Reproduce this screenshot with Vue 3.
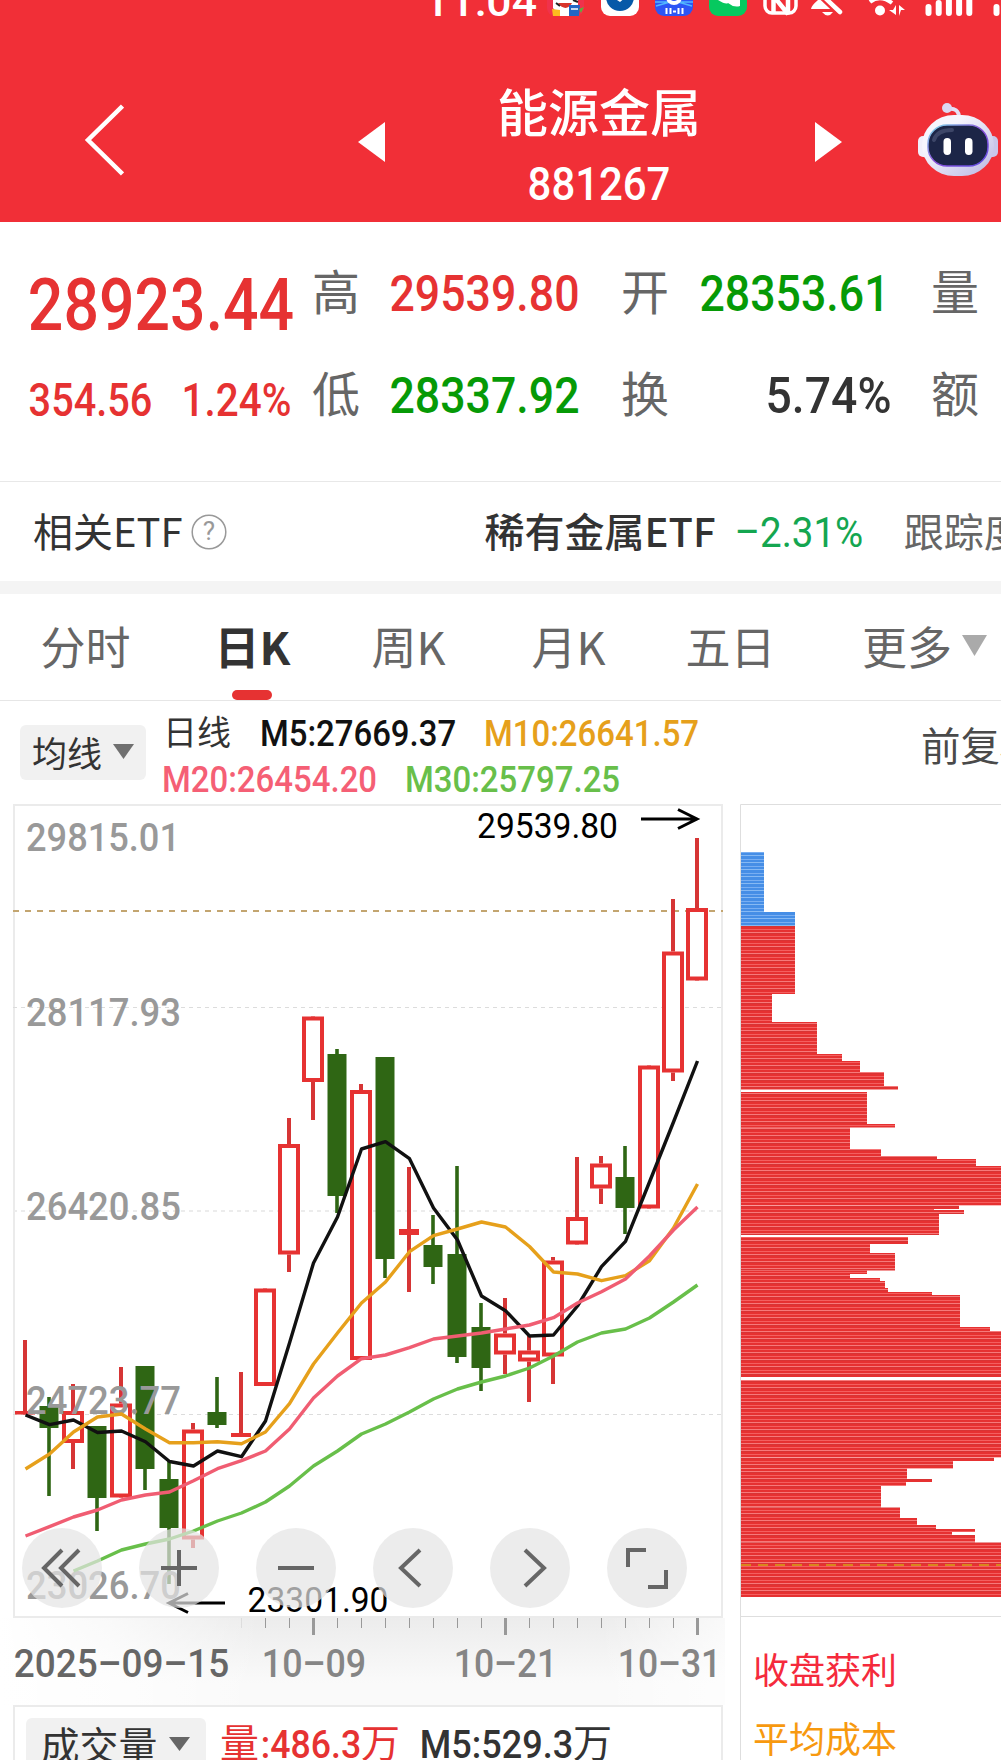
<template>
  <div class="page">
    <header class="header">
      <div class="status-bar">
        <svg width="577" height="20" viewBox="424 0 577 20">
          <text class="clock" x="424" y="15.5" textLength="113" lengthAdjust="spacingAndGlyphs">11:04</text>
          <!-- 应用通知图标 -->
          <rect x="547" y="-21" width="37" height="37" rx="8" fill="#f0324b" />
          <path d="M553 8V-4h25V8l-6 8h-12z" fill="#fff" />
          <path d="M558 3c5 7 11 6 14 0z" fill="#d8342b" />
          <path d="M556 3l4 3M573 0l5 2" stroke="#222" stroke-width="2" />
          <path d="M552 9l8 1v6h-7z" fill="#fdbb1f" />
          <path d="M569 5h11l-1 11h-10z" fill="#2166c4" />
          <path d="M571 9h7" stroke="#fff" stroke-width="1.5" />
          <path d="M579 9l5-2-3 6z" fill="#5fae3d" />
          <rect x="601" y="-22" width="38" height="38" rx="9" fill="#fff" />
          <circle cx="620" cy="-3" r="14" fill="#0659a8" />
          <path d="M614-2l6 4 6-5z" fill="#fff" />
          <rect x="655" y="-22" width="38" height="38" rx="9" fill="#2d55f5" />
          <path d="M655 2h38M656 6l14-4M692 6l-14-4" stroke="#53b7ff" stroke-width="1.5" />
          <circle cx="674" cy="-3" r="8" fill="#fff" />
          <path d="M670-2q4 4 8 0" fill="none" stroke="#2d55f5" stroke-width="2" />
          <path d="M666.500 8v6M670.500 8v6M673 11.500h3M678.500 8v6M682.500 8v6" stroke="#fff" stroke-width="2" />
          <rect x="709" y="-22" width="38" height="38" rx="9" fill="#06c95f" />
          <path d="M718 0q8 5 10 3q6 5 12 3V-4h-22z" fill="#fff" />
          <!-- NFC、静音、网络 -->
          <rect x="765" y="-19" width="31" height="32" rx="7" fill="none" stroke="#fff" stroke-width="3.500" />
          <path d="M773.500 14V-4L788 14V-10" fill="none" stroke="#fff" stroke-width="4.500" stroke-linejoin="bevel" />
          <path d="M811 9q0-3 7-9v-6h16v9l2 6z" fill="#fff" />
          <path d="M823-4l20 19" stroke="#f12f37" stroke-width="9" />
          <path d="M822-5l18 17" stroke="#fff" stroke-width="4.500" stroke-linecap="round" />
          <path d="M822 12h11q-5 7-11 0z" fill="#fff" />
          <path d="M870 2q10-8 22 1" fill="none" stroke="#fff" stroke-width="4" />
          <circle cx="880" cy="10.500" r="5" fill="#fff" />
          <path d="M896 5v10l-7-5h4zM899 16V5l6 5h-4z" fill="#fff" />
          <path
            v-for="(top, i) in signalTops"
            :key="'s' + i"
            :d="`M${928.500 + i * 10.200} ${top}V13`"
            stroke="#fff"
            stroke-width="6"
            stroke-linecap="round"
          />
          <path d="M996.500 7V13" stroke="#fff" stroke-width="6" stroke-linecap="round" />
        </svg>
      </div>
      <div class="nav">
        <svg class="back" width="40" height="72" viewBox="0 0 40 72">
          <path d="M38.500 2L4 36l34.500 34" fill="none" stroke="#fff" stroke-width="4.500" />
        </svg>
        <svg class="prev" width="27" height="40" viewBox="0 0 27 40">
          <path d="M27 0v40L0 20z" fill="#fff" />
        </svg>
        <div class="title">
          <span class="name">能源金属</span>
          <FitText text="881267" :w="140" :h="33" :weight="500" />
        </div>
        <svg class="next" width="27" height="40" viewBox="0 0 27 40">
          <path d="M0 0v40l27-20z" fill="#fff" />
        </svg>
        <svg class="robot" width="80" height="75" viewBox="0 0 80 75">
          <defs>
            <linearGradient id="shell" x1="0" y1="0" x2="1" y2="1">
              <stop offset="0.300" stop-color="#f6f5fd" />
              <stop offset="1" stop-color="#b9b6e2" />
            </linearGradient>
            <linearGradient id="rim" x1="0" y1="0" x2="1" y2="1">
              <stop offset="0" stop-color="#7fe0ea" />
              <stop offset="0.500" stop-color="#8a4fd8" />
              <stop offset="1" stop-color="#5a4be0" />
            </linearGradient>
          </defs>
          <path d="M29 6q12-2 12 9" fill="none" stroke="#e4e0f6" stroke-width="4" />
          <circle cx="29" cy="5" r="5" fill="#dcd8f2" />
          <rect x="0" y="33" width="12" height="21" rx="5" fill="#f1effb" />
          <rect x="68" y="33" width="12" height="21" rx="5" fill="#c9c6ea" />
          <rect x="4" y="12" width="72" height="61" rx="32" fill="url(#shell)" />
          <rect x="10" y="22" width="60" height="41" rx="19" fill="#1c2547" stroke="url(#rim)" stroke-width="1.500" />
          <path d="M16 37q3-10 18-10" fill="none" stroke="#3d4668" stroke-width="4" stroke-linecap="round" />
          <rect x="25.500" y="35" width="7.500" height="17" rx="3.700" fill="#fff" />
          <rect x="47" y="35" width="7.500" height="17" rx="3.700" fill="#fff" />
        </svg>
      </div>
    </header>

    <section class="quote">
      <div class="price">
        <FitText class="red" text="28923.44" :w="262" :h="51" :weight="500" />
        <div class="change red">
          <FitText text="354.56" :w="121" :h="33" :weight="500" />
          <FitText text="1.24%" :w="107" :h="33" :weight="500" />
        </div>
      </div>
      <div class="fields">
        <template v-for="f in fields" :key="f.label">
          <span class="label">{{ f.label }}</span>
          <FitText v-if="f.value" :class="['value', f.color]" :text="f.value" :w="f.w" :h="36" :weight="500" />
        </template>
      </div>
    </section>

    <section class="etf">
      <span>相关ETF</span>
      <svg class="help" width="36" height="36" viewBox="0 0 36 36">
        <circle cx="18" cy="18" r="16.800" fill="none" stroke="#999" stroke-width="1.500" />
        <text x="18" y="26" text-anchor="middle">?</text>
      </svg>
      <span class="etf-name">稀有金属ETF</span>
      <FitText class="etf-rate" text="–2.31%" :w="126" :h="30" />
      <span class="etf-track">跟踪度</span>
    </section>

    <ul class="tabs">
      <li v-for="t in tabs" :key="t" :class="{ active: t === '日K' }">{{ t }}</li>
      <li class="more">
        更多
        <svg width="25" height="21" viewBox="0 0 25 21"><path d="M0 0h25L12.500 21z" fill="#aaa" /></svg>
      </li>
    </ul>

    <section class="ma-bar">
      <button class="picker">
        均线
        <svg width="21" height="15" viewBox="0 0 21 15"><path d="M0 0h21L10.500 15z" fill="#707070" /></svg>
      </button>
      <div class="ma-list">
        <div class="ma-row">
          <span class="cycle">日线</span>
          <FitText class="m5" text="M5:27669.37" :w="194" :h="26" :weight="500" />
          <FitText class="m10" text="M10:26641.57" :w="213" :h="26" :weight="500" />
        </div>
        <div class="ma-row">
          <FitText class="m20" text="M20:26454.20" :w="213" :h="26" :weight="500" />
          <FitText class="m30" text="M30:25797.25" :w="213" :h="26" :weight="500" />
        </div>
      </div>
      <span class="adjust">前复权</span>
    </section>

    <div class="charts">
      <div class="kline">
        <svg class="kline-svg" width="725" height="814" viewBox="0 804 725 814">
          <rect x="14" y="805" width="708" height="812" fill="none" stroke="#ebebeb" stroke-width="2" />
          <path d="M13 1007.500H722M13 1414.500H722" stroke="#dcdcdc" stroke-dasharray="4 4" />
          <path d="M13 1211H722" stroke="#ececec" stroke-width="2" stroke-dasharray="4 4" />
          <path d="M13 911H723" stroke="#c3a570" stroke-width="2" stroke-dasharray="6 6" />

          <!-- K线 -->
          <g v-for="(c, i) in candles" :key="'c' + i">
            <template v-if="c[0]">
              <path
                :d="`M${candleX(i)} ${c[1]}V${c[2]}M${candleX(i)} ${c[3]}V${c[4]}`"
                stroke="#d63535"
                stroke-width="4"
              />
              <rect
                v-if="c[3] - c[2] > 7"
                :x="candleX(i) - 9"
                :y="c[2] + 2"
                width="18"
                :height="c[3] - c[2] - 4"
                fill="#fff"
                stroke="#e63232"
                stroke-width="4"
              />
              <rect v-else :x="candleX(i) - 10" :y="c[2]" width="20" :height="c[3] - c[2]" fill="#e63232" />
            </template>
            <template v-else>
              <path :d="`M${candleX(i)} ${c[1]}V${c[4]}`" stroke="#2f6614" stroke-width="3.600" />
              <rect :x="candleX(i) - 9.500" :y="c[2]" width="19" :height="c[3] - c[2]" fill="#2f6614" />
            </template>
          </g>

          <!-- 纵轴刻度 -->
          <text
            v-for="a in axisLabels"
            :key="a.text"
            class="axis-label"
            x="26"
            :y="a.y"
            :textLength="a.w"
            lengthAdjust="spacingAndGlyphs"
          >{{ a.text }}</text>

          <!-- 均线 -->
          <polyline
            v-for="m in maLines"
            :key="m.color"
            :points="toPoints(m)"
            fill="none"
            :stroke="m.color"
            stroke-width="3.400"
            stroke-linejoin="round"
          />

          <!-- 最高、最低标注 -->
          <text class="mark" x="477" y="838" textLength="141" lengthAdjust="spacingAndGlyphs">29539.80</text>
          <path d="M641 819H696M678 809.500L697 819l-19 9.500" fill="none" stroke="#000" stroke-width="3" />
          <text class="mark" x="247.500" y="1612" textLength="141" lengthAdjust="spacingAndGlyphs">23301.90</text>
          <path d="M225 1603H170M188 1593.500L169 1603l19 9.500" fill="none" stroke="#000" stroke-width="3" />
        </svg>

        <div class="tools">
          <button v-for="(d, i) in toolIcons" :key="'t' + i">
            <svg width="80" height="80" viewBox="0 0 80 80">
              <path :d="d" fill="none" stroke="#666" stroke-width="4" />
            </svg>
          </button>
        </div>

        <div class="time-axis">
          <svg class="ticks" width="725" height="31" viewBox="0 0 725 31">
            <path
              v-for="i in 20"
              :key="'k' + i"
              :d="tickPath(i)"
              :stroke="i === 1 ? '#ddd' : '#999'"
              :stroke-width="isMajor(i) ? 3 : 1"
            />
          </svg>
          <div class="dates">
            <FitText class="d0" text="2025–09–15" :w="213" :h="28" :weight="500" />
            <FitText class="d1" text="10–09" :w="102" :h="28" :weight="500" />
            <FitText class="d2" text="10–21" :w="101" :h="28" :weight="500" />
            <FitText class="d3" text="10–31" :w="101" :h="28" :weight="500" />
          </div>
        </div>

        <div class="volume">
          <button class="picker vol-picker">
            成交量
            <svg width="21" height="14" viewBox="0 0 21 14"><path d="M0 0h21L10.500 14z" fill="#666" /></svg>
          </button>
          <span class="vol red">量<FitText text=":486.3" :w="98" :h="28" :weight="500" />万</span>
          <span class="vol vol-m5"><FitText text="M5:529.3" :w="151" :h="28" :weight="500" />万</span>
        </div>
      </div>

      <div class="chips">
        <svg class="chip-svg" width="261" height="813" viewBox="740 804 261 813">
          <defs>
            <pattern id="stripe-red" patternUnits="userSpaceOnUse" x="0" y="855" width="10" height="7">
              <rect width="10" height="7" fill="#e63131" />
              <rect width="10" height="1" fill="#f7797a" />
              <rect y="1" width="10" height="1" fill="#d83434" />
              <rect y="4" width="10" height="1" fill="#f45f5f" />
            </pattern>
            <pattern id="stripe-blue" patternUnits="userSpaceOnUse" x="0" y="855" width="10" height="7">
              <rect width="10" height="7" fill="#468ee6" />
              <rect width="10" height="1" fill="#86b9f3" />
              <rect y="4" width="10" height="1" fill="#78aef2" />
            </pattern>
          </defs>
          <path d="M1001 804.500H740.500V1617M740 1616.500H1001" fill="none" stroke="#dedede" />
          <rect
            v-for="(r, i) in chipRows"
            :key="'r' + i"
            x="741"
            :y="r[0]"
            :width="r[2]"
            :height="r[1] - r[0]"
            :fill="r[0] < 926 ? 'url(#stripe-blue)' : 'url(#stripe-red)'"
          />
          <path d="M741 1565H1001" stroke="#d9861c" stroke-width="2" stroke-dasharray="10 7" />
        </svg>
        <div class="chip-legend">
          <span class="profit">收盘获利</span>
          <span class="cost">平均成本</span>
        </div>
      </div>
    </div>
  </div>
</template>

<script setup>
import { h } from 'vue'

// 数字文本：w、h 为字形的宽度和大写高度
const FitText = (props) => {
  const size = props.h / 0.711
  const pad = size * 0.03
  return h('svg', { width: props.w, height: props.h, style: { overflow: 'visible', flex: 'none' } }, [
    h('text', {
      x: -pad,
      y: props.h,
      textLength: props.w + pad * 2,
      lengthAdjust: 'spacingAndGlyphs',
      fill: 'currentColor',
      'font-size': size,
      'font-weight': props.weight || 400,
      'font-family': 'Roboto, sans-serif'
    }, props.text)
  ])
}
FitText.props = ['text', 'w', 'h', 'weight']

const signalTops = [7, 3, 0, 0, 0]

const fields = [
  { label: '高', value: '29539.80', w: 187, color: 'red' },
  { label: '开', value: '28353.61', w: 187, color: 'green' },
  { label: '量' },
  { label: '低', value: '28337.92', w: 187, color: 'green' },
  { label: '换', value: '5.74%', w: 123, color: 'dark' },
  { label: '额' }
]

const tabs = ['分时', '日K', '周K', '月K', '五日']

// [是否上涨, 最高, 实体上沿, 实体下沿, 最低]
const candles = [
  [1, 1340, 1411, 1414.5, 1414],
  [0, 1397, 1406, 1428, 1496],
  [1, 1384, 1411, 1443, 1469],
  [0, 1426, 1426, 1498, 1531],
  [1, 1367, 1403.5, 1497.5, 1497],
  [0, 1366, 1366, 1469, 1490],
  [0, 1460, 1479, 1528, 1584],
  [1, 1423, 1429.5, 1539.5, 1548],
  [0, 1377, 1412, 1425, 1428],
  [1, 1372, 1433, 1437, 1437],
  [1, 1290, 1288.5, 1386, 1386],
  [1, 1118, 1144, 1254.5, 1272],
  [1, 1016, 1016.5, 1082, 1120],
  [0, 1049, 1054, 1196, 1213],
  [1, 1084, 1090, 1360, 1360],
  [0, 1057, 1057, 1259, 1278],
  [1, 1167, 1229, 1235, 1292],
  [0, 1215, 1245, 1267, 1284],
  [0, 1166, 1254, 1357, 1363],
  [0, 1303, 1327, 1368, 1391],
  [1, 1298, 1333.5, 1354.5, 1374],
  [1, 1335, 1350.5, 1361.5, 1402],
  [1, 1257, 1260.5, 1356.5, 1384],
  [1, 1157, 1217, 1244.5, 1244],
  [1, 1156, 1163.5, 1188.5, 1204],
  [0, 1146, 1177, 1208, 1234],
  [1, 1066, 1065.5, 1208.5, 1208],
  [1, 899, 951.5, 1072.5, 1081],
  [1, 838, 908, 980.5, 981]
]
const candleX = (i) => 25 + i * 24

const axisLabels = [
  { text: '29815.01', y: 851, w: 154 },
  { text: '28117.93', y: 1026, w: 155 },
  { text: '26420.85', y: 1219.5, w: 155 },
  { text: '24723.77', y: 1414, w: 155 },
  { text: '23026.70', y: 1599, w: 155 }
]

const maLines = [
  {
    color: '#68bf4a',
    start: 2,
    ys: [1571, 1561, 1550, 1544, 1539, 1531, 1521, 1513, 1502, 1486, 1466, 1451, 1434, 1424, 1412, 1399, 1389, 1382,
      1376, 1368, 1356, 1342, 1333, 1329, 1318, 1302, 1285]
  },
  {
    color: '#111',
    start: 0,
    ys: [1415, 1424.7, 1420, 1432.5, 1431, 1441.7, 1461.5, 1466, 1451, 1456.7, 1421, 1343, 1263, 1217, 1149, 1141.7,
      1158.7, 1208, 1240, 1296, 1310.7, 1336, 1335, 1306, 1266.7, 1241.3, 1182, 1122, 1061]
  },
  {
    color: '#e6a01b',
    start: 0,
    ys: [1469, 1454, 1432, 1417, 1414, 1429, 1442.7, 1442.7, 1441.7, 1443.7, 1432, 1403.7, 1364, 1333, 1303, 1282,
      1251.7, 1235.7, 1229, 1222, 1227, 1246.5, 1272, 1274, 1280.7, 1275.7, 1260.7, 1228, 1184]
  },
  {
    color: '#f05d72',
    start: 0,
    ys: [1536, 1526.7, 1517, 1510, 1500, 1495, 1492, 1480.7, 1468.7, 1460.7, 1451, 1429, 1398, 1376, 1358.7, 1355,
      1347.7, 1339, 1336, 1333, 1329, 1325, 1317.7, 1303, 1291.7, 1279, 1256, 1230, 1207]
  }
]
const toPoints = (m) => m.ys.map((y, i) => `${candleX(i + m.start) + 0.5},${y}`).join(' ')

const toolIcons = [
  'M40 22L22 40l18 18M57 22L39 40l18 18',
  'M22 40h36M40 22v36',
  'M22 40h36',
  'M47 22L28 40l19 18',
  'M35 22l19 18-19 18',
  'M21 39V22h18M41 59h18V42'
]

// 时间轴刻度
const isMajor = (i) => i === 4 || i === 12 || i === 20
const tickPath = (i) => `M${217.5 + i * 24} 0V${isMajor(i) ? 17 : 10}`

// 筹码分布：[上沿, 下沿, 宽度]
const chipRows = [
  [852, 912, 23], [912, 926, 54], [926, 994, 54], [994, 1022, 31], [1022, 1054, 76], [1054, 1061, 101],
  [1061, 1072, 119], [1072, 1086, 143], [1086, 1089.5, 157], [1092, 1124, 126], [1124, 1127.5, 154],
  [1127.5, 1149, 109], [1149, 1156, 140], [1156, 1159, 196], [1159, 1166, 235], [1166, 1205.5, 260],
  [1205.5, 1209, 218], [1209, 1210, 193], [1210, 1214, 223], [1214, 1235, 198], [1237, 1244, 167],
  [1244, 1253, 129], [1253, 1270.5, 154], [1270.5, 1274, 126], [1274, 1278, 109], [1278, 1281, 139],
  [1281, 1288, 144], [1288, 1292, 147], [1292, 1295, 191], [1295, 1327, 219], [1327, 1331, 249],
  [1331, 1377, 260], [1380, 1457.5, 260], [1457.5, 1461, 253], [1461, 1468.5, 212], [1468.5, 1479, 166],
  [1479, 1482, 191], [1482, 1486, 165], [1486, 1507.5, 140], [1507.5, 1518, 159], [1518, 1525, 176],
  [1525, 1529, 195], [1529, 1532, 234], [1532, 1535, 211], [1535, 1542.5, 234], [1542.5, 1597, 260]
]
</script>

<style>
body {
  margin: 0;
  background: #fff;
}
</style>

<style scoped>
.page {
  width: 1001px;
  height: 1760px;
  overflow: hidden;
  background: #fff;
  color: #333;
  font-family: "Noto Sans CJK SC", sans-serif;
  line-height: 1;
}

svg {
  display: block;
  flex: none;
}

span {
  flex: none;
  white-space: nowrap;
}

button {
  flex: none;
  border: 0;
  padding: 0;
  font: inherit;
  color: inherit;
}

.red {
  color: #e63232;
}

.green {
  color: #069a06;
}

.dark {
  color: #333;
}

.header {
  height: 222px;
  background: #f12f37;
  color: #fff;
}

.status-bar {
  height: 60px;
  padding-left: 424px;
}

.clock {
  font: 500 42px Roboto, sans-serif;
  fill: #fff;
}

.nav {
  height: 160px;
  display: flex;
  align-items: center;
}

.back {
  margin-left: 84px;
}

.prev {
  margin: 4px 0 0 234px;
}

.title {
  width: 204px;
  margin: 4px 0 0 112px;
  display: flex;
  flex-direction: column;
  align-items: center;
  gap: 31px;
}

.name {
  font-size: 51px;
  font-weight: 500;
}

.next {
  margin: 4px 0 0 114px;
}

.robot {
  margin-left: 76px;
}

.quote {
  height: 259px;
  display: flex;
  border-bottom: 1px solid #e8e8e8;
}

.price {
  width: 282px;
  padding: 57px 0 0 30px;
}

.change {
  display: flex;
  gap: 32px;
  margin-top: 53px;
}

.fields {
  padding-top: 43px;
  display: grid;
  grid-template-columns: 79px 230px 80px 230px 48px;
  grid-template-rows: 48px 48px;
  row-gap: 54px;
}

.label {
  font-size: 48px;
  color: #666;
}

.value {
  margin-top: 10px;
}

.value.dark {
  justify-self: end;
  margin-right: 41px;
}

.etf {
  height: 96px;
  padding: 0 0 3px 33px;
  display: flex;
  align-items: center;
  font-size: 40px;
  border-bottom: 13px solid #f4f4f4;
}

.help {
  margin: 3px 0 0 8px;
}

.help text {
  font: 26px Roboto, sans-serif;
  fill: #999;
}

.etf-name {
  margin-left: 258px;
  font-weight: 500;
}

.etf-rate {
  margin: 4px 0 0 20px;
  color: #14a650;
}

.etf-track {
  margin-left: 42px;
  color: #666;
}

.tabs {
  height: 106px;
  margin: 0;
  padding: 0;
  list-style: none;
  display: grid;
  grid-template-columns: 171px 163px 149px 171px 153px 194px;
  border-bottom: 1px solid #e6e6e6;
  color: #666;
  font-size: 45px;
}

.tabs li {
  display: flex;
  align-items: center;
  justify-content: center;
  padding-bottom: 4px;
}

.tabs .active {
  position: relative;
  color: #333;
  font-weight: 700;
}

.active::after {
  content: "";
  position: absolute;
  left: 61px;
  bottom: 0;
  width: 40px;
  height: 10px;
  border-radius: 5px;
  background: #e63232;
}

.tabs .more {
  justify-content: flex-start;
  padding-left: 55px;
  gap: 10px;
}

.ma-bar {
  height: 103px;
  padding-left: 20px;
  display: flex;
  align-items: flex-start;
}

.picker {
  width: 126px;
  height: 55px;
  margin-top: 24px;
  padding-bottom: 2px;
  display: flex;
  align-items: center;
  justify-content: center;
  gap: 11px;
  border-radius: 6px;
  background: #f1f1f1;
  font-size: 35px;
  line-height: 1;
}

.ma-list {
  flex: none;
  width: 758px;
  margin: 13px 0 0 17px;
}

.ma-row {
  height: 46px;
  display: flex;
  align-items: flex-start;
}

.ma-row svg {
  margin-top: 6px;
}

.cycle {
  width: 98px;
  font-size: 34px;
}

.m5 {
  color: #111;
}

.m10 {
  margin-left: 30px;
  color: #e6a01b;
}

.m20 {
  color: #f55f75;
}

.m30 {
  margin-left: 30px;
  color: #68bf4a;
}

.adjust {
  margin-top: 23px;
  font-size: 39.5px;
  color: #4a4a4a;
}

.charts {
  display: flex;
  gap: 15px;
}

.kline {
  position: relative;
  width: 725px;
}

.axis-label {
  font: 500 39.4px Roboto, sans-serif;
  fill: #999;
}

.mark {
  font: 400 34.5px Roboto, sans-serif;
  fill: #000;
}

.tools {
  position: absolute;
  left: 22px;
  top: 724px;
  display: flex;
  gap: 37px;
}

.tools button {
  width: 80px;
  height: 80px;
  border-radius: 50%;
  background: rgba(228, 228, 228, 0.7);
}

.time-axis {
  height: 87px;
  background:
    linear-gradient(90deg, #fff 0, rgba(255, 255, 255, 0.7) 110px, rgba(255, 255, 255, 0) 260px,
      rgba(255, 255, 255, 0) 600px, rgba(255, 255, 255, 0.7) 725px),
    linear-gradient(#ececec, #fafafa 75%);
}

.dates {
  display: flex;
  padding-left: 15px;
  color: #858585;
}

.d0 {
  color: #666;
}

.d1 {
  margin-left: 35px;
}

.d2 {
  margin-left: 90px;
}

.d3 {
  margin-left: 63px;
}

.volume {
  width: 706px;
  height: 60px;
  margin-left: 13px;
  display: flex;
  align-items: flex-start;
  border: 2px solid #ebebeb;
  border-bottom: 0;
  box-sizing: content-box;
}

.vol-picker {
  width: 180px;
  margin: 11px 0 0 11px;
  padding: 0 2px 4px 0;
  font-size: 39px;
  box-sizing: border-box;
}

.vol {
  display: flex;
  margin: 14px 0 0 14px;
  font-size: 39px;
}

.vol svg {
  margin: 9px 1px 0 3px;
}

.vol-m5 {
  margin-left: 18px;
}

.chips {
  width: 261px;
}

.chip-legend {
  height: 143px;
  padding: 33px 0 0 12px;
  display: flex;
  flex-direction: column;
  gap: 33px;
  border-left: 1px solid #dedede;
  font-size: 36px;
}

.profit {
  color: #f52a3c;
}

.cost {
  color: #f7990f;
}
</style>
